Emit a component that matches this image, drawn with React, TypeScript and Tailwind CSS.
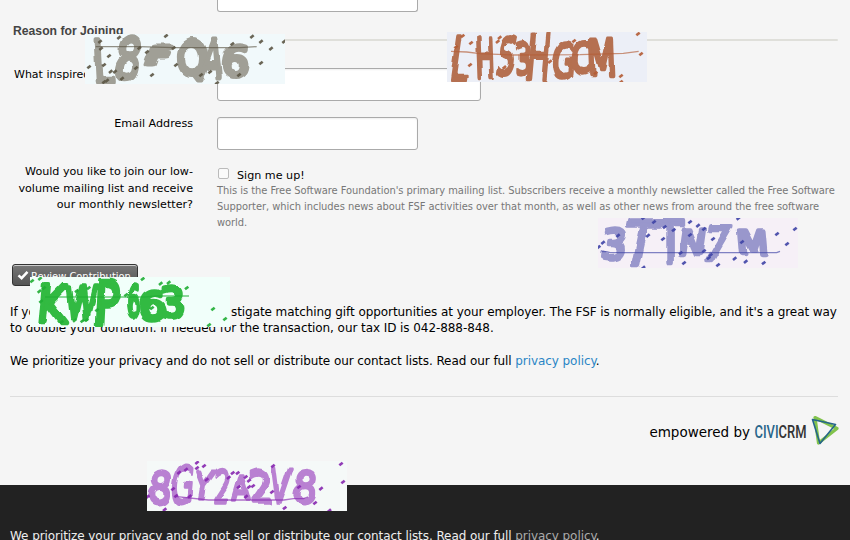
import React from "react";

type Glyph = [string, number, number, number, number, number?];

interface ScribbleProps {
  id: string;
  className: string;
  view: string;
  ink: string;
  dot: string;
  weight: number;
  line: string;
  glyphs: Glyph[];
  dots: [number, number][];
}

// Each glyph is [character, left, top, width, height, slant]
function Scribble({ id, className, view, ink, dot, weight, line, glyphs, dots }: ScribbleProps) {
  return (
    <svg className={"absolute h-[50px] w-[200px] overflow-hidden " + className} viewBox={view}>
      <filter id={id} x="-5%" y="-5%" width="110%" height="110%">
        <feTurbulence type="fractalNoise" baseFrequency="0.018" numOctaves="1" seed="4" />
        <feDisplacementMap in="SourceGraphic" scale="22" xChannelSelector="R" yChannelSelector="G" />
      </filter>
      <g filter={`url(#${id})`} fill={ink} stroke={ink} strokeWidth={weight} strokeLinejoin="round" strokeLinecap="round" fontFamily="'DejaVu Sans', sans-serif">
        {glyphs.map(([c, x, y, w, h, slant = 0], i) => {
          const inner = h - weight;
          return (
            <g key={i} transform={`translate(${x + w / 2} ${y + h / 2}) skewX(${slant})`}>
              <text x={-w / 2} y={inner / 2} fontSize={inner / 0.73} textLength={w} lengthAdjust="spacingAndGlyphs">
                {c}
              </text>
            </g>
          );
        })}
      </g>
      <path d={line} fill="none" stroke={dot} strokeWidth="4" opacity="0.65" />
      <g stroke={dot} strokeWidth="8" opacity="0.9">
        {dots.map(([x, y], i) => (
          <line key={i} x1={x - 5} y1={y + 4} x2={x + 5} y2={y - 4} />
        ))}
      </g>
    </svg>
  );
}

const input = "box-border rounded-[3px] border border-[#aaa] bg-white shadow-[inset_0_1px_2px_#eee]";

export default function App() {
  return (
    <div className="relative h-[540px] w-[850px] overflow-hidden bg-[#f5f5f5] font-['DejaVu_Sans',sans-serif] text-black">
      <main className="flex h-[485px] flex-col">
        <div className="h-3 pl-[217px]">
          <div className="h-3 w-[201px] rounded-b-[3px] border border-t-0 border-[#aaa] bg-white" />
        </div>
        <div className="mt-[10px] flex h-[19px] items-start pl-[13px] pr-3">
          <h2 className="w-[116px] whitespace-nowrap font-['Liberation_Sans',sans-serif] text-[12.2px] font-bold leading-[18px] text-[#444]">Reason for Joining</h2>
          <div className="mt-[17px] h-[2px] flex-1 rounded bg-[#dfdfda]" />
        </div>
        <div className="mt-[27px] flex h-[33px] text-[11px]">
          <div className="w-[217px] whitespace-nowrap pl-[14px] leading-[14px]">What inspired you to join?</div>
          <div className={input + " h-[33px] w-[264px]"} />
        </div>
        <div className="mt-4 flex h-[33px] text-[11.15px]">
          <div className="w-[193px] pr-0 text-right leading-[13px]">Email Address</div>
          <div className={input + " ml-6 h-[33px] w-[201px]"} />
        </div>
        <div className="mt-[13px] flex h-[70px] text-[11.15px]">
          <div className="w-[193px] whitespace-nowrap pt-px text-right leading-[16.5px]">
            Would you like to join our low-<br />volume mailing list and receive<br />our monthly newsletter?
          </div>
          <div className="ml-6 flex-1 pt-[5px]">
            <div className="flex h-[15px] items-start">
              <span className="ml-px h-[11px] w-[11px] rounded-[2px] border border-[#bbb] bg-[#fafafa]" />
              <span className="ml-[8px] leading-[16px]">Sign me up!</span>
            </div>
            <p className="whitespace-nowrap font-['DejaVu_Sans_Condensed','DejaVu_Sans',sans-serif] text-[11px] leading-4 tracking-[-0.03px] text-[#777]">
              This is the Free Software Foundation's primary mailing list. Subscribers receive a monthly newsletter called the Free Software<br />
              Supporter, which includes news about FSF activities over that month, as well as other news from around the free software<br />
              world.
            </p>
          </div>
        </div>
        <div className="mt-[31px] pl-3">
          <button className="flex h-[22px] w-[126px] items-center gap-[2px] rounded-[3px] border border-[#333] bg-gradient-to-b from-[#777] to-[#555] pl-1 text-[11px] text-white shadow-[inset_0_1px_0_#ccc]">
            <svg className="h-3 w-3 shrink-0" viewBox="0 0 12 12"><path d="M1.5 6.3 4.6 9.2 10.5 2.8" fill="none" stroke="white" strokeWidth="2.5" /></svg>
            <span className="whitespace-nowrap pt-[4px] font-['DejaVu_Sans_Condensed','DejaVu_Sans',sans-serif]">Review Contribution</span>
          </button>
        </div>
        <p className="mt-[18px] whitespace-nowrap pl-[10px] text-[12px] leading-4 tracking-[-0.07px]">
          <span className="inline-block w-[221px]">If you are employed, please do inve</span>stigate matching gift opportunities at your employer. The FSF is normally eligible, and it's a great way<br />
          to double your donation. If needed for the transaction, our tax ID is 042-888-848.
        </p>
        <p className="mt-[17px] whitespace-nowrap pl-[10px] text-[12px] leading-4 tracking-[-0.075px]">
          We prioritize your privacy and do not sell or distribute our contact lists. Read our full <a className="text-[#2a85c5]">privacy policy</a>.
        </p>
        <div className="ml-[10px] mr-3 mt-[27px] h-px bg-[#ddd]" />
        <div className="mt-[18px] flex h-8 items-center justify-end pr-[11px]">
          <span className="whitespace-nowrap pt-[3px] text-[13.5px]">empowered by</span>
          <svg className="ml-1 h-8 w-[85px]" viewBox="0 0 85 32">
            <text x="0.5" y="22.5" fontFamily="'Roboto', sans-serif" fontWeight="500" fontSize="18.5" textLength="52" lengthAdjust="spacingAndGlyphs" fill="#333"><tspan fill="#28658a">CIVI</tspan>CRM</text>
            <path d="M61 2.5 83 13.5 64.5 28Z" fill="none" stroke="#82c34c" strokeWidth="3.2" strokeLinejoin="round" />
            <path d="M58.5 4.5 81.5 9.5 66 28.5Z" fill="none" stroke="#25658a" strokeWidth="1.6" strokeLinejoin="round" />
          </svg>
        </div>
      </main>
      <footer className="h-[55px] whitespace-nowrap bg-[#222] pl-[10px] pt-[43px] text-[12px] leading-4 tracking-[-0.075px] text-[#eee]">
        We prioritize your privacy and do not sell or distribute our contact lists. Read our full <a className="text-[#aaa]">privacy policy</a>.
      </footer>

      <Scribble
        id="wobble-a"
        className="left-[85px] top-[34px] bg-[#f1f9fb]" view="15 27 600 150" ink="#a09f96" dot="#5c5645" weight={15}
        line="M47 65H178L280 68H480L530 65"
        glyphs={[["L", 38, 36, 62, 142, 3], ["8", 106, 30, 80, 140, -8], ["F", 204, 58, 62, 66, -20], ["Q", 290, 38, 92, 118], ["A", 364, 34, 66, 132, -8], ["6", 425, 56, 82, 104, -5]]}
        dots={[[60,50],[63,71],[117,38],[258,33],[27,126],[72,120],[87,93],[92,140],[105,140],[72,171],[81,167],[126,161],[168,129],[178,69],[201,81],[281,69],[288,120],[216,150],[363,150],[390,141],[411,174],[477,150],[457,57],[516,35],[543,50],[573,71],[543,114],[612,50]]}
      />
      <Scribble
        id="wobble-b"
        className="left-[447px] top-[32px] bg-[#eceff7]" view="21 21 600 150" ink="#b57051" dot="#b45c35" weight={13}
        line="M33 79 80 81 120 86 220 90 420 89 550 85 596 79"
        glyphs={[["L", 33, 28, 54, 144, -8], ["H", 106, 32, 58, 132, 2], ["S", 178, 28, 48, 125, -10], ["3", 224, 50, 48, 102], ["H", 260, 23, 72, 146, -5], ["G", 338, 46, 66, 118, -5], ["C", 395, 46, 62, 104, -6], ["M", 440, 34, 90, 122, 2]]}
        dots={[[68,33],[48,66],[93,54],[90,120],[179,38],[173,50],[402,48],[330,110],[467,144],[193,127],[594,27],[603,87],[543,153],[543,171]]}
      />
      <Scribble
        id="wobble-c"
        className="left-[598px] top-[218px] bg-[#f6f0f7]" view="24 24 600 150" ink="#9997cc" dot="#3f44a7" weight={13}
        line="M36 125H50L60 128H560L570 124"
        glyphs={[["3", 32, 51, 78, 100, -7], ["T", 100, 25, 102, 150, -12], ["T", 200, 25, 80, 140], ["N", 266, 50, 84, 90, -8], ["7", 340, 42, 84, 118, -13], ["M", 440, 55, 96, 84, 5]]}
        dots={[[84,77],[39,98],[26,111],[160,24],[192,36],[224,51],[251,60],[174,77],[219,87],[300,36],[324,47],[342,57],[300,75],[369,87],[342,123],[272,129],[356,144],[362,135],[282,159],[384,165],[434,146],[467,155],[456,96],[521,159],[445,25],[561,72],[591,102],[615,57],[160,173]]}
      />
      <Scribble
        id="wobble-d"
        className="left-[30px] top-[277px] bg-[#f1fffa]" view="75 51 600 150" ink="#32ba42" dot="#20ae34" weight={14}
        line="M120 111H420L455 108H552"
        glyphs={[["K", 98, 65, 88, 130, -5], ["W", 183, 73, 92, 108, -4], ["P", 268, 54, 78, 146, -3], ["6", 365, 70, 40, 108], ["6", 402, 87, 80, 96], ["3", 465, 77, 76, 102]]}
        dots={[[81,63],[103,94],[108,124],[105,56],[117,84],[215,93],[251,84],[170,186],[209,181],[232,183],[245,180],[276,150],[363,105],[413,57],[467,71],[491,68],[545,84],[441,144],[624,147],[660,177],[612,195]]}
      />
      <Scribble
        id="wobble-e"
        className="left-[147px] top-[461px] bg-[#f5f9f8]" view="21 18 600 150" ink="#b981d2" dot="#8727b0" weight={11}
        line="M105 124 205 135H432L460 131H490L505 126"
        glyphs={[["8", 25, 43, 70, 105, -6], ["G", 94, 27, 68, 122, -5], ["Y", 166, 42, 54, 91, -10], ["2", 221, 43, 48, 107, -5], ["A", 275, 55, 54, 85], ["2", 328, 40, 68, 108, 4], ["V", 390, 34, 60, 115, -6], ["8", 459, 43, 74, 104, -5]]}
        dots={[[23,125],[74,164],[117,53],[138,44],[171,23],[171,39],[192,33],[200,74],[99,102],[108,123],[149,124],[266,68],[278,54],[293,54],[317,66],[327,77],[296,96],[327,96],[339,93],[318,125],[399,33],[396,111],[477,96],[434,159],[525,144],[543,101],[603,27],[609,81],[568,167]]}
      />
    </div>
  );
}
